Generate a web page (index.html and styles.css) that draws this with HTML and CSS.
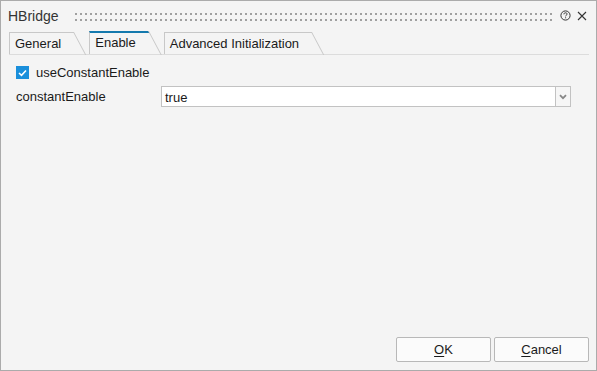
FILE: index.html
```html
<!DOCTYPE html>
<html lang="en">
<head>
    <meta charset="UTF-8">
    <title>HBridge</title>
    <link rel="stylesheet" href="styles.css">
</head>
<body>
    <div class="dialog">
        <div class="titlebar">
            <span class="title">HBridge</span>
            <span class="grip"></span>
            <svg class="help" width="11" height="11" viewBox="0 0 11 11">
                <circle cx="5.5" cy="5.5" r="4.6" fill="none" stroke="#333" stroke-width="1"/>
                <path d="M3.9 4.3 C3.9 3.2 4.7 2.8 5.5 2.8 C6.4 2.8 7.1 3.3 7.1 4.1 C7.1 5.1 5.6 5.2 5.6 6.3" fill="none" stroke="#333" stroke-width="1"/>
                <rect x="5.1" y="7.3" width="1" height="1" fill="#333"/>
            </svg>
            <svg class="close" width="10" height="10" viewBox="0 0 10 10">
                <path d="M1 1 L9 9 M9 1 L1 9" stroke="#333" stroke-width="1.1"/>
            </svg>
        </div>

        <div class="tabs">
            <div class="tab">General</div>
            <div class="tab active">Enable</div>
            <div class="tab">Advanced Initialization</div>
        </div>

        <div class="content">
            <label class="check-row">
                <span class="checkbox">
                    <svg width="9" height="8" viewBox="0 0 9 8">
                        <path d="M1 4 L3.5 6.3 L8 1.5" fill="none" stroke="#fff" stroke-width="1.6"/>
                    </svg>
                </span>
                useConstantEnable
            </label>
            <div class="field-row">
                <span class="field-label">constantEnable</span>
                <div class="select">
                    <span class="select-value">true</span>
                    <span class="select-arrow">
                        <svg width="8" height="6" viewBox="0 0 8 6">
                            <path d="M1 1.2 L4 4.2 L7 1.2" fill="none" stroke="#888" stroke-width="1.8"/>
                        </svg>
                    </span>
                </div>
            </div>
        </div>

        <div class="buttons">
            <button class="btn"><u>O</u>K</button>
            <button class="btn"><u>C</u>ancel</button>
        </div>
    </div>
</body>
</html>
```

FILE: styles.css
```css
html, body {
    margin: 0;
    padding: 0;
}
body {
    font-family: "Liberation Sans", Arial, sans-serif;
    font-size: 13px;
    color: #1a1a1a;
    background-color: #f4f4f4;
}
.dialog {
    width: 597px;
    height: 371px;
    box-sizing: border-box;
    border: 1px solid #ababab;
    background-color: #f4f4f4;
    display: flex;
    flex-direction: column;
}

/* Title bar */
.titlebar {
    display: flex;
    align-items: center;
    height: 29px;
    padding: 0 9px 0 7px;
}
.title {
    font-size: 14px;
    color: #333;
}
.grip {
    flex: 1;
    height: 8px;
    margin: 2px 7px 0 16px;
    background-image: linear-gradient(to right, #a0a0a0 2px, transparent 2px);
    background-size: 5px 6px;
    -webkit-mask-image: linear-gradient(to bottom, #000 2px, transparent 2px);
    -webkit-mask-size: 5px 6px;
    mask-image: linear-gradient(to bottom, #000 2px, transparent 2px);
    mask-size: 5px 6px;
}
.help {
    margin-right: 6px;
}

/* Tabs */
.tabs {
    display: flex;
    height: 22px;
    margin: 2px 7px 0 8px;
    border-bottom: 1px solid #dcdcdc;
    padding-right: 12px;
}
.tab {
    position: relative;
    box-sizing: border-box;
    height: 22px;
    padding: 3px 13px 0 5px;
    margin-right: 15px;
    border-top: 1px solid #c8c8c8;
    border-left: 1px solid #c8c8c8;
    color: #1a1a1a;
    white-space: nowrap;
}
.tab::after {
    content: "";
    position: absolute;
    right: 0;
    top: -1px;
    height: 23px;
    width: 0;
    border-right: 1px solid #c8c8c8;
    transform: skewX(28deg);
    transform-origin: top left;
}
.tab.active {
    border-top: 2px solid #1479ad;
    padding-top: 2px;
    margin-top: -1px;
    height: 23px;
    background-color: #f4f4f4;
}
.tab.active::after {
    top: -2px;
    height: 24px;
}

/* Content */
.content {
    flex: 1;
    padding: 10px 25px 0 15px;
}
.check-row {
    display: flex;
    align-items: center;
    height: 15px;
}
.checkbox {
    width: 13px;
    height: 13px;
    margin-right: 7px;
    background-color: #1a8fdb;
    display: flex;
    align-items: center;
    justify-content: center;
}
.field-row {
    display: flex;
    align-items: center;
    margin-top: 6px;
}
.field-label {
    width: 145px;
}
.select {
    flex: 1;
    display: flex;
    height: 21px;
    box-sizing: border-box;
    border: 1px solid #c2c2c2;
    background-color: #fff;
}
.select-value {
    flex: 1;
    padding: 3px 0 0 3px;
}
.select-arrow {
    width: 14px;
    border-left: 1px solid #c2c2c2;
    background-color: #f6f6f6;
    display: flex;
    align-items: center;
    justify-content: center;
}

/* Buttons */
.buttons {
    display: flex;
    justify-content: flex-end;
    gap: 3px;
    padding: 0 7px 8px 0;
}
.btn {
    width: 95px;
    height: 25px;
    font-family: "Liberation Sans", Arial, sans-serif;
    font-size: 13px;
    color: #1a1a1a;
    background-color: #fbfbfb;
    border: 1px solid #b8b8b8;
    border-radius: 2px;
}
.btn u {
    text-underline-offset: 2px;
}
```
